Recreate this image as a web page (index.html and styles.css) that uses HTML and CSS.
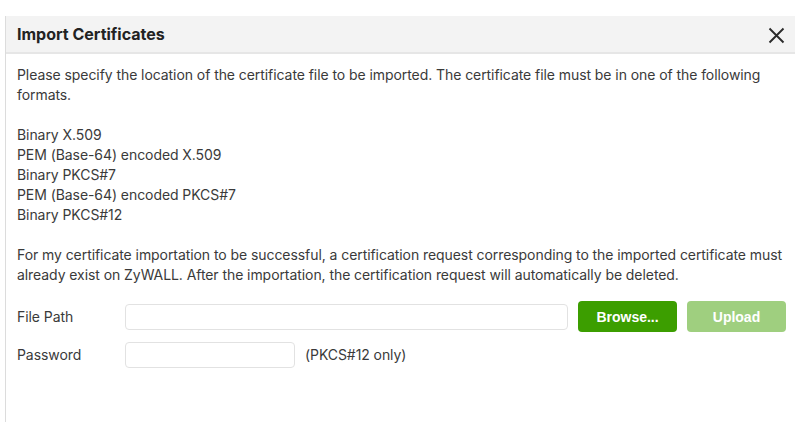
FILE: index.html
```html
<!DOCTYPE html>
<html lang="en">
<head>
<meta charset="utf-8">
<title>Import Certificates</title>
<link rel="stylesheet" href="styles.css">
</head>
<body>
<div class="dialog">
  <div class="dialog-header">
    <h1 class="dialog-title">Import Certificates</h1>
    <button class="close-btn" aria-label="Close">
      <svg width="17" height="17" viewBox="0 0 17 17"><path d="M1.5 1.5 L15.5 15.5 M15.5 1.5 L1.5 15.5" stroke="#2b2b2b" stroke-width="1.9" fill="none"/></svg>
    </button>
  </div>
  <div class="dialog-body">
    <p class="para">Please specify the location of the certificate file to be imported. The certificate file must be in one of the following formats.</p>
    <ul class="formats">
      <li>Binary X.509</li>
      <li>PEM (Base-64) encoded X.509</li>
      <li>Binary PKCS#7</li>
      <li>PEM (Base-64) encoded PKCS#7</li>
      <li>Binary PKCS#12</li>
    </ul>
    <p class="para para-last">For my certificate importation to be successful, a certification request corresponding to the imported certificate must already exist on ZyWALL. After the importation, the certification request will automatically be deleted.</p>
    <div class="form">
      <div class="form-row">
        <label class="label">File Path</label>
        <input class="input input-file" type="text">
        <button class="btn btn-primary">Browse...</button>
        <button class="btn btn-disabled">Upload</button>
      </div>
      <div class="form-row">
        <label class="label">Password</label>
        <input class="input input-pass" type="password">
        <span class="hint">(PKCS#12 only)</span>
      </div>
    </div>
  </div>
</div>
</body>
</html>
```
FILE: styles.css
```css
html, body {
  margin: 0;
  padding: 0;
  background: #ffffff;
}
body {
  font-family: "Inter", "Noto Sans", sans-serif;
  color: #3a3a3a;
  font-size: 14px;
}
.dialog {
  margin: 16px 0 0 5px;
  width: 789px;
  height: 406px;
  border-left: 1px solid #dcdcdc;
  background: #fff;
  display: flex;
  flex-direction: column;
}
.dialog-header {
  height: 36px;
  background: #f3f3f3;
  border-bottom: 2px solid #e6e6e6;
  display: flex;
  align-items: center;
  justify-content: space-between;
  padding: 0 10px 0 11px;
}
.dialog-title {
  margin: 0;
  font-size: 16px;
  font-weight: 700;
  color: #222;
}
.close-btn {
  border: none;
  background: none;
  padding: 0;
  width: 17px;
  height: 17px;
  display: flex;
  margin-top: 2px;
}
.dialog-body {
  padding: 11px 8px 0 11px;
  line-height: 20px;
  letter-spacing: -0.07px;
}
.para {
  margin: 0 0 20px 0;
}
.para-last {
  margin-bottom: 16px;
}
.formats {
  list-style: none;
  margin: 0 0 20px 0;
  padding: 0;
}
.form {
  display: flex;
  flex-direction: column;
  gap: 10px;
}
.form-row {
  display: flex;
  align-items: center;
}
.form-row > * {
  flex: none;
}
.label {
  width: 108px;
}
.input {
  height: 26px;
  box-sizing: border-box;
  border: 1px solid #e2e2e2;
  border-radius: 4px;
  background: #fff;
  padding: 0 8px;
}
.input-file {
  width: 443px;
}
.input-pass {
  width: 170px;
}
.btn {
  height: 31px;
  width: 99px;
  border: none;
  border-radius: 4px;
  font-family: "Liberation Sans", Arial, sans-serif;
  font-weight: 700;
  font-size: 14px;
  letter-spacing: 0;
  color: #fff;
  padding: 0;
}
.btn-primary {
  margin-left: 10px;
  background: #3c9e00;
}
.btn-disabled {
  margin-left: 10px;
  background: #9fcf7f;
}
.hint {
  margin-left: 10px;
}
```
